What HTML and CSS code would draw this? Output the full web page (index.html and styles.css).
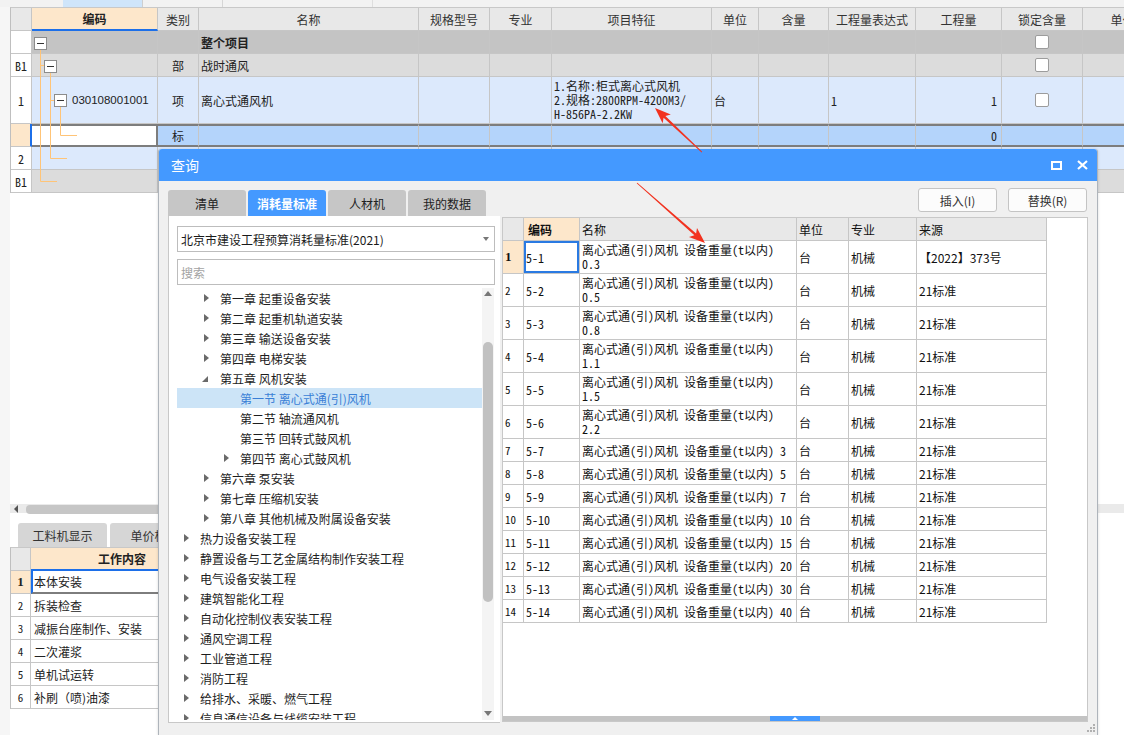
FILE: index.html
```html
<!DOCTYPE html>
<html lang="zh">
<head>
<meta charset="utf-8">
<title>查询</title>
<link rel="stylesheet" href="styles.css">
</head>
<body>
<div class="app">
  <div class="topstrip"><span class="ts-a"></span><span class="ts-b"></span><span class="ts-c"></span></div>
  <div class="upper">
    <div class="mgrid">
      <div class="mrow mhead">
        <div class="mc"></div>
        <div class="mc code-h">编码</div>
        <div class="mc">类别</div>
        <div class="mc">名称</div>
        <div class="mc">规格型号</div>
        <div class="mc">专业</div>
        <div class="mc">项目特征</div>
        <div class="mc">单位</div>
        <div class="mc">含量</div>
        <div class="mc">工程量表达式</div>
        <div class="mc">工程量</div>
        <div class="mc">锁定含量</div>
        <div class="mc">单价</div>
      </div>
      <div class="mrow r-total">
        <div class="mc rn"></div>
        <div class="mc"></div>
        <div class="mc ctr"></div>
        <div class="mc"><b>整个项目</b></div>
        <div class="mc"></div><div class="mc"></div><div class="mc"></div><div class="mc"></div>
        <div class="mc"></div><div class="mc"></div><div class="mc"></div>
        <div class="mc ctr"><span class="cb"></span></div>
        <div class="mc"></div>
      </div>
      <div class="mrow r-part">
        <div class="mc rn">B1</div>
        <div class="mc"></div>
        <div class="mc ctr">部</div>
        <div class="mc">战时通风</div>
        <div class="mc"></div><div class="mc"></div><div class="mc"></div><div class="mc"></div>
        <div class="mc"></div><div class="mc"></div><div class="mc"></div>
        <div class="mc ctr"><span class="cb"></span></div>
        <div class="mc"></div>
      </div>
      <div class="mrow r-item tall">
        <div class="mc rn">1</div>
        <div class="mc code-num">030108001001</div>
        <div class="mc ctr">项</div>
        <div class="mc">离心式通风机</div>
        <div class="mc"></div>
        <div class="mc"></div>
        <div class="mc feat"><span>1.名称:柜式离心式风机<br>2.规格:2800RPM-4200M3/<br>H-856PA-2.2KW</span></div>
        <div class="mc">台</div>
        <div class="mc"></div>
        <div class="mc mono">1</div>
        <div class="mc rgt mono">1</div>
        <div class="mc ctr"><span class="cb"></span></div>
        <div class="mc"></div>
      </div>
      <div class="mrow r-sel">
        <div class="mc rn"></div>
        <div class="mc code-sel"></div>
        <div class="mc ctr">标</div>
        <div class="mc"></div>
        <div class="mc"></div><div class="mc"></div><div class="mc"></div><div class="mc"></div>
        <div class="mc"></div><div class="mc"></div>
        <div class="mc rgt mono">0</div>
        <div class="mc"></div>
        <div class="mc"></div>
      </div>
      <div class="mrow r-item">
        <div class="mc rn">2</div>
        <div class="mc"></div><div class="mc"></div><div class="mc"></div><div class="mc"></div>
        <div class="mc"></div><div class="mc"></div><div class="mc"></div><div class="mc"></div>
        <div class="mc"></div><div class="mc"></div><div class="mc ctr"><span class="cb"></span></div><div class="mc"></div>
      </div>
      <div class="mrow r-part">
        <div class="mc rn">B1</div>
        <div class="mc"></div><div class="mc"></div><div class="mc"></div><div class="mc"></div>
        <div class="mc"></div><div class="mc"></div><div class="mc"></div><div class="mc"></div>
        <div class="mc"></div><div class="mc"></div><div class="mc ctr"><span class="cb"></span></div><div class="mc"></div>
      </div>
      <svg class="treelines" width="200" height="200" viewBox="0 0 200 200">
        <g stroke="#ffc477" stroke-width="1" fill="none">
          <path d="M40.5 49 V181.5 H57"/>
          <path d="M40.5 65.5 H44"/>
          <path d="M50.5 72 V158.5 H67"/>
          <path d="M50.5 100.5 H54"/>
          <path d="M60.5 106 V135.5 H77"/>
        </g>
        <g fill="#fff" stroke="#8c8c8c" stroke-width="1">
          <rect x="34.5" y="37.5" width="12" height="12"/>
          <rect x="44.5" y="60.5" width="12" height="12"/>
          <rect x="54.5" y="94.5" width="12" height="12"/>
        </g>
        <g stroke="#333" stroke-width="1">
          <path d="M37 43.5 H44"/>
          <path d="M47 66.5 H54"/>
          <path d="M57 100.5 H64"/>
        </g>
      </svg>
    </div>
  </div>
  <div class="lower">
    <div class="hscroll"><span class="harrow"></span><span class="hthumb"></span></div>
    <div class="btabs"><div class="btab">工料机显示</div><div class="btab">单价构成</div></div>
    <div class="wgrid">
      <div class="wrow whead"><div class="wc"></div><div class="wc wh">工作内容</div></div>
      <div class="wrow wsel"><div class="wc wrn">1</div><div class="wc">本体安装</div></div>
      <div class="wrow"><div class="wc wrn">2</div><div class="wc">拆装检查</div></div>
      <div class="wrow"><div class="wc wrn">3</div><div class="wc">减振台座制作、安装</div></div>
      <div class="wrow"><div class="wc wrn">4</div><div class="wc">二次灌浆</div></div>
      <div class="wrow"><div class="wc wrn">5</div><div class="wc">单机试运转</div></div>
      <div class="wrow"><div class="wc wrn">6</div><div class="wc">补刷（喷)油漆</div></div>
    </div>
  </div>
</div>

<div class="dialog">
  <div class="dlg-title">
    <span class="dlg-name">查询</span>
    <div class="dlg-ctrl">
      <svg width="11" height="9" viewBox="0 0 11 9"><rect x="1" y="1" width="9" height="7" fill="none" stroke="#fff" stroke-width="2"/></svg>
      <svg width="11" height="10" viewBox="0 0 11 10"><path d="M1 1 L10 9 M10 1 L1 9" stroke="#fff" stroke-width="2.2"/></svg>
    </div>
  </div>
  <div class="dlg-body">
    <div class="dtabs">
      <div class="dtab">清单</div>
      <div class="dtab on">消耗量标准</div>
      <div class="dtab">人材机</div>
      <div class="dtab">我的数据</div>
    </div>
    <div class="dbtns">
      <button class="dbtn">插入(I)</button>
      <button class="dbtn">替换(R)</button>
    </div>
    <div class="lpanel">
      <div class="select">北京市建设工程预算消耗量标准(2021)<span class="sel-arrow"></span></div>
      <div class="search">搜索</div>
      <div class="tree">
        <div class="tlist">
          <div class="ti l1"><span class="ar"></span>第一章 起重设备安装</div>
          <div class="ti l1"><span class="ar"></span>第二章 起重机轨道安装</div>
          <div class="ti l1"><span class="ar"></span>第三章 输送设备安装</div>
          <div class="ti l1"><span class="ar"></span>第四章 电梯安装</div>
          <div class="ti l1"><span class="ar open"></span>第五章 风机安装</div>
          <div class="ti l2 sel"><span class="ar none"></span>第一节 离心式通(引)风机</div>
          <div class="ti l2"><span class="ar none"></span>第二节 轴流通风机</div>
          <div class="ti l2"><span class="ar none"></span>第三节 回转式鼓风机</div>
          <div class="ti l2"><span class="ar"></span>第四节 离心式鼓风机</div>
          <div class="ti l1"><span class="ar"></span>第六章 泵安装</div>
          <div class="ti l1"><span class="ar"></span>第七章 压缩机安装</div>
          <div class="ti l1"><span class="ar"></span>第八章 其他机械及附属设备安装</div>
          <div class="ti l0"><span class="ar"></span>热力设备安装工程</div>
          <div class="ti l0"><span class="ar"></span>静置设备与工艺金属结构制作安装工程</div>
          <div class="ti l0"><span class="ar"></span>电气设备安装工程</div>
          <div class="ti l0"><span class="ar"></span>建筑智能化工程</div>
          <div class="ti l0"><span class="ar"></span>自动化控制仪表安装工程</div>
          <div class="ti l0"><span class="ar"></span>通风空调工程</div>
          <div class="ti l0"><span class="ar"></span>工业管道工程</div>
          <div class="ti l0"><span class="ar"></span>消防工程</div>
          <div class="ti l0"><span class="ar"></span>给排水、采暖、燃气工程</div>
          <div class="ti l0"><span class="ar"></span>信息通信设备与线缆安装工程</div>
        </div>
        <div class="vscroll">
          <span class="vs-up"></span>
          <span class="vs-thumb"></span>
          <span class="vs-fill"></span>
          <span class="vs-down"></span>
        </div>
      </div>
    </div>
    <div class="rpanel">
      <div class="rtable">
        <div class="rrow rhead">
          <div class="rc"></div><div class="rc rcode-h">编码</div><div class="rc">名称</div><div class="rc">单位</div><div class="rc">专业</div><div class="rc">来源</div>
        </div>
        <div class="rrow r2 rsel">
          <div class="rc rrn">1</div><div class="rc rcode">5-1</div><div class="rc rname">离心式通(引)风机 设备重量(t以内)<br>0.3</div><div class="rc">台</div><div class="rc">机械</div><div class="rc rsrc">【2022】373号</div>
        </div>
        <div class="rrow r2">
          <div class="rc rrn">2</div><div class="rc">5-2</div><div class="rc rname">离心式通(引)风机 设备重量(t以内)<br>0.5</div><div class="rc">台</div><div class="rc">机械</div><div class="rc rsrc">21标准</div>
        </div>
        <div class="rrow r2">
          <div class="rc rrn">3</div><div class="rc">5-3</div><div class="rc rname">离心式通(引)风机 设备重量(t以内)<br>0.8</div><div class="rc">台</div><div class="rc">机械</div><div class="rc rsrc">21标准</div>
        </div>
        <div class="rrow r2">
          <div class="rc rrn">4</div><div class="rc">5-4</div><div class="rc rname">离心式通(引)风机 设备重量(t以内)<br>1.1</div><div class="rc">台</div><div class="rc">机械</div><div class="rc rsrc">21标准</div>
        </div>
        <div class="rrow r2">
          <div class="rc rrn">5</div><div class="rc">5-5</div><div class="rc rname">离心式通(引)风机 设备重量(t以内)<br>1.5</div><div class="rc">台</div><div class="rc">机械</div><div class="rc rsrc">21标准</div>
        </div>
        <div class="rrow r2">
          <div class="rc rrn">6</div><div class="rc">5-6</div><div class="rc rname">离心式通(引)风机 设备重量(t以内)<br>2.2</div><div class="rc">台</div><div class="rc">机械</div><div class="rc rsrc">21标准</div>
        </div>
        <div class="rrow">
          <div class="rc rrn">7</div><div class="rc">5-7</div><div class="rc">离心式通(引)风机 设备重量(t以内) 3</div><div class="rc">台</div><div class="rc">机械</div><div class="rc rsrc">21标准</div>
        </div>
        <div class="rrow">
          <div class="rc rrn">8</div><div class="rc">5-8</div><div class="rc">离心式通(引)风机 设备重量(t以内) 5</div><div class="rc">台</div><div class="rc">机械</div><div class="rc rsrc">21标准</div>
        </div>
        <div class="rrow">
          <div class="rc rrn">9</div><div class="rc">5-9</div><div class="rc">离心式通(引)风机 设备重量(t以内) 7</div><div class="rc">台</div><div class="rc">机械</div><div class="rc rsrc">21标准</div>
        </div>
        <div class="rrow">
          <div class="rc rrn">10</div><div class="rc">5-10</div><div class="rc">离心式通(引)风机 设备重量(t以内) 10</div><div class="rc">台</div><div class="rc">机械</div><div class="rc rsrc">21标准</div>
        </div>
        <div class="rrow">
          <div class="rc rrn">11</div><div class="rc">5-11</div><div class="rc">离心式通(引)风机 设备重量(t以内) 15</div><div class="rc">台</div><div class="rc">机械</div><div class="rc rsrc">21标准</div>
        </div>
        <div class="rrow">
          <div class="rc rrn">12</div><div class="rc">5-12</div><div class="rc">离心式通(引)风机 设备重量(t以内) 20</div><div class="rc">台</div><div class="rc">机械</div><div class="rc rsrc">21标准</div>
        </div>
        <div class="rrow">
          <div class="rc rrn">13</div><div class="rc">5-13</div><div class="rc">离心式通(引)风机 设备重量(t以内) 30</div><div class="rc">台</div><div class="rc">机械</div><div class="rc rsrc">21标准</div>
        </div>
        <div class="rrow">
          <div class="rc rrn">14</div><div class="rc">5-14</div><div class="rc">离心式通(引)风机 设备重量(t以内) 40</div><div class="rc">台</div><div class="rc">机械</div><div class="rc rsrc">21标准</div>
        </div>
      </div>
      <div class="rbar"><span class="rhandle"></span></div>
    </div>
  </div>
  <svg class="grip" width="8" height="8" viewBox="0 0 8 8"><g fill="#b0b0b0"><rect x="6" y="0" width="2" height="2"/><rect x="3" y="3" width="2" height="2"/><rect x="6" y="3" width="2" height="2"/><rect x="0" y="6" width="2" height="2"/><rect x="3" y="6" width="2" height="2"/><rect x="6" y="6" width="2" height="2"/></g></svg>
</div>

<svg class="annot" width="1124" height="735" viewBox="0 0 1124 735">
  <g fill="#f2321f">
    <polygon points="655,108 670.8,114.5 665.4,116.0 702.2,151.8 701.6,152.4 663.6,117.8 662.6,123.3"/>
    <polygon points="705,243 697.0,227.9 696.1,233.5 637.3,182.7 636.7,183.3 694.4,235.3 689.0,236.9"/>
  </g>
</svg>
</body>
</html>
```

FILE: styles.css
```css
* { box-sizing: border-box; }
html, body { margin: 0; padding: 0; }
body {
  width: 1124px;
  height: 735px;
  overflow: hidden;
  position: relative;
  background: #f6f6f6;
  font-family: "Noto Sans CJK SC", "Microsoft YaHei", sans-serif;
  font-size: 12px;
  color: #222;
}

.app { height: 735px; display: flex; flex-direction: column; }

/* top strip */
.topstrip { height: 7px; flex: none; display: flex; background: #f2f2f2; padding-left: 63px; }
.ts-a { width: 80px; background: #cfe5fa; border-right: 1px solid #cfcfcf; }
.ts-b { width: 80px; border-right: 1px solid #d6d6d6; }
.ts-c { width: 150px; border-right: 1px solid #dedede; }

/* main grid */
.upper { height: 493px; flex: none; margin-left: 10px; background: #fff; overflow: hidden; }
.mgrid { position: relative; border-left: 1px solid #bfbfbf; border-top: 1px solid #c8c8c8; width: 1160px; }
.mrow {
  display: grid;
  grid-template-columns: 21px 126px 41px 220px 71px 62px 160px 47px 70px 87px 86px 81px 80px;
  height: 23px;
}
.mrow.tall { height: 47px; }
.mc {
  border-right: 1px solid #c6c6c6;
  border-bottom: 1px solid #c6c6c6;
  display: flex;
  align-items: center;
  padding: 0 2px;
  white-space: nowrap;
  overflow: hidden;
}
.mhead .mc { background: #e8e8e8; justify-content: center; color: #333; }
.mhead .code-h { background: #fde7cb; font-weight: bold; color: #222; border-bottom: 2px solid #1c6fe9; }
.ctr { justify-content: center; }
.rgt { justify-content: flex-end; padding-right: 4px; }
.mono, .feat, .rn { font-family: "Noto Sans Mono CJK SC", "Liberation Mono", "Noto Sans CJK SC", monospace; }
.rn { background: #fff; justify-content: center; }
.r-total .mc { background: #c4c4c4; }
.r-part .mc { background: #dcdcdc; }
.r-item .mc { background: #dce9fc; }
.r-total .rn, .r-part .rn, .r-item .rn { background: #fff; }
.code-num { padding-left: 40px; font-family: "Liberation Sans", sans-serif; font-size: 11.5px; }
.feat span { line-height: 14px; white-space: nowrap; }
.r-sel .mc { background: #b4d4fb; border-top: 2px solid #7d7d7d; border-bottom: 2px solid #7d7d7d; }
.r-sel .rn { background: #fde7cb; border-top: none; border-bottom: 1px solid #c6c6c6; border-right: 2px solid #1c6fe9; }
.r-sel .code-sel { background: #fff; border-right: 2px solid #7d7d7d; }
.cb { width: 14px; height: 14px; border: 1px solid #9c9c9c; border-radius: 2px; background: #fff; display: block; }
.treelines { position: absolute; left: -11px; top: -8px; pointer-events: none; }

/* lower panel */
.lower { flex: 1; margin-left: 10px; background: #fff; display: flex; flex-direction: column; }
.hscroll { height: 14px; flex: none; padding-top: 4px; display: flex; align-items: center; background: linear-gradient(#fff 0 4px, #eaeaea 4px 13px, #fff 13px); }
.harrow { width: 0; height: 0; border-right: 4px solid #555; border-top: 4px solid transparent; border-bottom: 4px solid transparent; margin-left: 4px; }
.hthumb { width: 300px; height: 9px; border-radius: 4px; background: #c6c6c6; margin-left: 8px; }
.btabs { height: 33px; flex: none; display: flex; align-items: flex-end; gap: 3px; padding-left: 8px; }
.btab { width: 89px; height: 24px; background: #d6d6d6; border-radius: 3px 3px 0 0; display: flex; align-items: center; justify-content: center; color: #333; }
.wgrid { border-left: 1px solid #bfbfbf; border-top: 1px solid #c8c8c8; width: 220px; }
.wrow { display: grid; grid-template-columns: 20px 183px; height: 23px; }
.wc { border-right: 1px solid #c6c6c6; border-bottom: 1px solid #c6c6c6; display: flex; align-items: center; padding: 0 3px; white-space: nowrap; }
.whead .wc { background: #e8e8e8; }
.whead .wh { background: #fde7cb; font-weight: bold; justify-content: center; border-bottom: 2px solid #1c6fe9; }
.wrn { justify-content: center; padding: 0; font-family: "Noto Sans Mono CJK SC", "Liberation Mono", monospace; font-size: 11px; }
.wsel .wrn { background: #fde7cb; font-weight: bold; font-family: "Liberation Serif", serif; font-size: 13px; }
.wsel .wc:last-child { border-left: 2px solid #1c6fe9; border-bottom: 2px solid #7d7d7d; padding-left: 1px; }

/* dialog */
.dialog {
  position: absolute;
  left: 158px;
  top: 149px;
  width: 940px;
  height: 587px;
  background: #f0f0f0;
  border: 1px solid #aeb4bb;
  border-top: none;
  border-radius: 3px 3px 0 0;
  box-shadow: 0 0 3px rgba(0,0,0,0.15);
  z-index: 5;
}
.dlg-title {
  height: 32px;
  background: #4499ff;
  color: #fff;
  display: flex;
  align-items: center;
  justify-content: space-between;
  padding: 0 9px 0 12px;
  border-radius: 3px 3px 0 0;
}
.dlg-name { font-size: 14px; }
.dlg-ctrl { display: flex; align-items: center; gap: 15px; }
.dlg-ctrl svg { display: block; }
.dlg-body {
  display: grid;
  grid-template-columns: 332px 586px;
  grid-template-rows: 35px 507px;
  column-gap: 2px;
  padding-left: 9px;
}
.dtabs { display: flex; align-items: flex-end; gap: 2px; }
.dtab { width: 78px; height: 26px; background: #c6c6c6; border-radius: 3px 3px 0 0; display: flex; align-items: center; justify-content: center; font-size: 12px; color: #222; }
.dtab.on { background: #4499ff; color: #fff; font-weight: bold; }
.dbtns { display: flex; justify-content: flex-end; gap: 11px; padding-top: 7px; padding-right: 1px; }
.dbtn {
  width: 79px; height: 24px;
  background: #fcfcfc;
  border: 1px solid #c4c4c4;
  border-radius: 3px;
  font-family: "Noto Sans CJK SC", sans-serif;
  font-size: 12px;
  color: #333;
  padding: 0;
}

.lpanel { background: #fff; border-left: 1px solid #c8c8c8; border-bottom: 1px solid #c8c8c8; padding: 10px 0 0 8px; }
.select {
  width: 318px; height: 26px;
  border: 1px solid #bdbdbd;
  display: flex; align-items: center;
  padding-left: 3px;
  font-size: 12px; color: #1a1a1a;
  position: relative;
}
.sel-arrow { position: absolute; right: 5px; top: 10px; width: 0; height: 0; border-top: 4px solid #777; border-left: 3.5px solid transparent; border-right: 3.5px solid transparent; }
.search {
  width: 318px; height: 26px; margin-top: 7px;
  border: 1px solid #bdbdbd;
  display: flex; align-items: center;
  padding-left: 3px;
  font-size: 12px; color: #a3a3a3;
}
.tree { margin-top: 3px; height: 432px; display: flex; }
.tlist { width: 305px; overflow: hidden; }
.ti { height: 20px; display: flex; align-items: center; font-size: 12px; color: #1d1d1d; white-space: nowrap; }
.ti.l0 { padding-left: 5px; }
.ti.l1 { padding-left: 25px; }
.ti.l2 { padding-left: 45px; }
.ti.sel { background: #cce4f7; color: #3a7fd6; }
.ar { width: 8px; height: 20px; margin-right: 10px; position: relative; flex: none; }
.ar::before {
  content: ""; position: absolute; left: 2px; top: 6px;
  border-left: 5px solid #6a6a6a; border-top: 4px solid transparent; border-bottom: 4px solid transparent;
}
.ar.open::before { left: 0; top: 8px; border-left: 6px solid transparent; border-bottom: 6px solid #6a6a6a; border-top: none; }
.ar.none::before { display: none; }
.vscroll { width: 12px; margin-left: 0; display: flex; flex-direction: column; align-items: center; background: #f4f4f4; }
.vs-up { flex: none; width: 0; border-bottom: 5px solid #777; border-left: 4.5px solid transparent; border-right: 4.5px solid transparent; margin-top: 3px; height: 0; margin-bottom: 6px; }
.vs-thumb { width: 10px; height: 260px; border-radius: 5px; background: #c1c1c1; margin-top: 40px; flex: none; }
.vs-fill { flex: 1; }
.vs-down { width: 0; height: 0; border-top: 5px solid #777; border-left: 4.5px solid transparent; border-right: 4.5px solid transparent; margin-bottom: 4px; }

.rpanel { margin-top: 1px; height: 505px; background: #fff; border: 1px solid #c8c8c8; display: flex; flex-direction: column; }
.rtable { width: 545px; }
.rrow { display: grid; grid-template-columns: 21px 56px 217px 52px 68px 130px; height: 23px; }
.rrow.r2 { height: 33px; }
.rc {
  border-right: 1px solid #c6c6c6;
  border-bottom: 1px solid #c6c6c6;
  display: flex; align-items: center;
  padding: 0 2px;
  white-space: nowrap; overflow: hidden;
  font-family: "Noto Sans Mono CJK SC", "Liberation Mono", "Noto Sans CJK SC", monospace;
  font-size: 12px;
  color: #111;
}
.rname { line-height: 14px; }
.rhead .rc { background: #e8e8e8; font-family: "Noto Sans Mono CJK SC", "Noto Sans CJK SC", sans-serif; }
.rhead .rcode-h { background: #fde7cb; font-weight: bold; padding-left: 4px; }
.rrn { padding-left: 2px; font-size: 11px; }
.rsel .rrn { background: #fde7cb; font-weight: bold; font-family: "Liberation Serif", serif; font-size: 13px; }
.rsel .rcode { box-shadow: inset 0 0 0 2px #2a7ae2; }
.rsrc { font-family: "Noto Sans CJK SC", sans-serif; }
.rbar { margin-top: auto; height: 5px; background: #c3c3c3; display: flex; justify-content: center; }
.rhandle { width: 50px; height: 5px; background: #4499ff; position: relative; }
.rhandle::after { content: ""; position: absolute; left: 22px; top: 1px; border-bottom: 3px solid #fff; border-left: 3px solid transparent; border-right: 3px solid transparent; }
.grip { position: absolute; right: 2px; bottom: 3px; }

.annot { position: absolute; left: 0; top: 0; pointer-events: none; z-index: 10; }
```
